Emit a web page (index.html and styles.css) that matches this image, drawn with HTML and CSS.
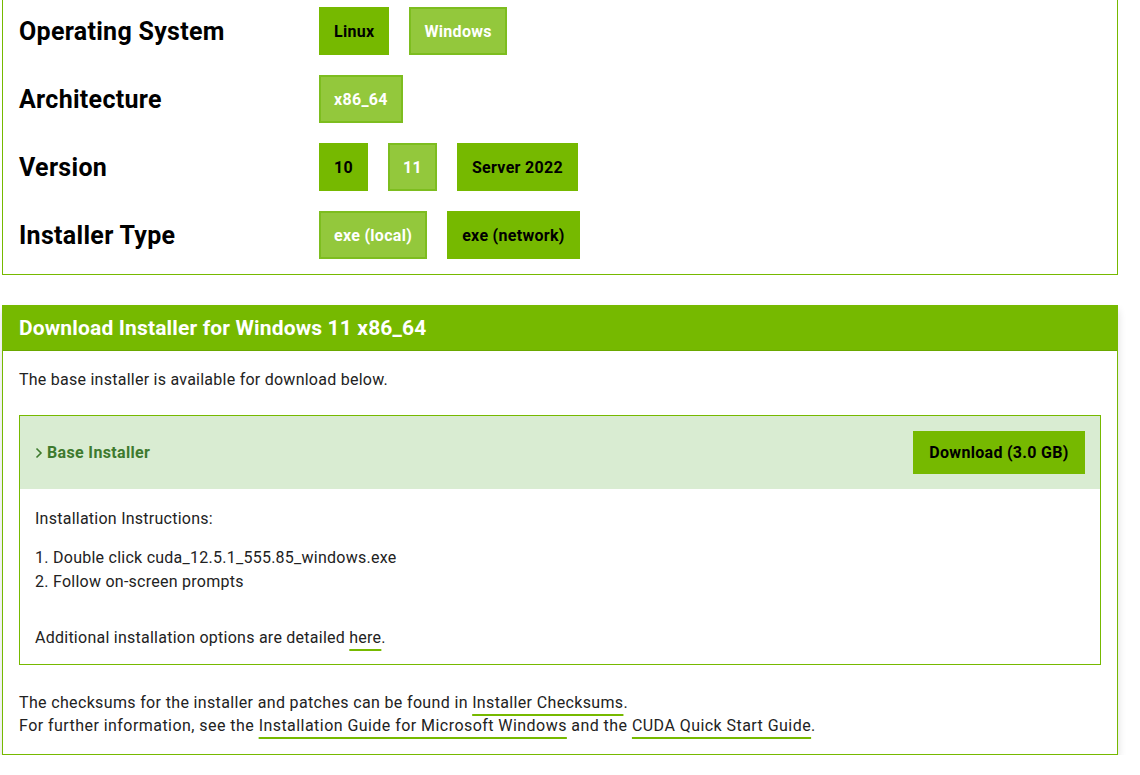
FILE: index.html
```html
<!DOCTYPE html>
<html lang="en">
<head>
<meta charset="utf-8">
<title>CUDA Toolkit Download</title>
<link rel="stylesheet" href="styles.css">
</head>
<body>
<div class="page">
  <section class="card selector">
    <div class="row">
      <div class="label">Operating System</div>
      <div class="opts">
        <span class="opt">Linux</span>
        <span class="opt active">Windows</span>
      </div>
    </div>
    <div class="row">
      <div class="label">Architecture</div>
      <div class="opts">
        <span class="opt active">x86_64</span>
      </div>
    </div>
    <div class="row">
      <div class="label">Version</div>
      <div class="opts">
        <span class="opt">10</span>
        <span class="opt active">11</span>
        <span class="opt">Server 2022</span>
      </div>
    </div>
    <div class="row">
      <div class="label">Installer Type</div>
      <div class="opts">
        <span class="opt active">exe (local)</span>
        <span class="opt">exe (network)</span>
      </div>
    </div>
  </section>

  <section class="card download">
    <h2 class="dl-head">Download Installer for Windows 11 x86_64</h2>
    <div class="dl-body">
      <p class="intro">The base installer is available for download below.</p>
      <div class="installer">
        <div class="inst-head">
          <div class="inst-title">
            <svg class="chev" width="8" height="12" viewBox="0 0 8 12"><path d="M1.5 1.5 L6 6 L1.5 10.5" fill="none" stroke="#3e7a2e" stroke-width="1.6"/></svg>
            <span>Base Installer</span>
          </div>
          <span class="dl-btn">Download (3.0 GB)</span>
        </div>
        <div class="inst-body">
          <p>Installation Instructions:</p>
          <ol>
            <li>Double click cuda_12.5.1_555.85_windows.exe</li>
            <li>Follow on-screen prompts</li>
          </ol>
          <p class="additional">Additional installation options are detailed <a href="#">here</a>.</p>
        </div>
      </div>
      <div class="footer-text">
        <p>The checksums for the installer and patches can be found in <a href="#">Installer Checksums</a>.</p>
        <p class="more">For further information, see the <a href="#">Installation Guide for Microsoft Windows</a> and the <a href="#">CUDA Quick Start Guide</a>.</p>
      </div>
    </div>
  </section>
</div>
</body>
</html>
```

FILE: styles.css
```css
html, body {
  margin: 0;
  padding: 0;
  background: #fff;
}
body {
  font-family: Roboto, "Noto Sans", "Liberation Sans", sans-serif;
  color: #1a1a1a;
}
.page {
  width: 1116px;
  margin-left: 2px;
}
.card {
  border: 1px solid #76b900;
  background: #fff;
}
.selector {
  margin-top: -7px;
  padding: 13px 16px 15px 16px;
  display: flex;
  flex-direction: column;
  gap: 20px;
}
.row {
  display: flex;
  align-items: center;
  height: 48px;
}
.label {
  width: 300px;
  font-size: 25px;
  font-weight: 700;
  color: #000;
  letter-spacing: 0.3px;
}
.opts {
  display: flex;
  gap: 20px;
}
.opt {
  box-sizing: border-box;
  height: 48px;
  display: flex;
  align-items: center;
  padding: 0 13px;
  background: #76b900;
  border: 2px solid #76b900;
  font-size: 16px;
  font-weight: 700;
  color: #000;
  letter-spacing: 0.3px;
}
.opt.active {
  background: #93c83c;
  border-color: #7dbd1f;
  color: #fff;
}
.download {
  margin-top: 30px;
  box-shadow: 0 5px 8px rgba(0, 0, 0, 0.14);
}
.dl-head {
  margin: 0;
  height: 44px;
  display: flex;
  align-items: center;
  padding-left: 16px;
  background: #76b900;
  border-bottom: 1px solid #6aa800;
  color: #fff;
  font-size: 21px;
  font-weight: 700;
  letter-spacing: 0.15px;
}
.dl-body {
  padding: 18px 16px 17px 16px;
  font-size: 16px;
  letter-spacing: 0.25px;
  color: #222;
}
.dl-body p {
  margin: 0;
  line-height: 22px;
}
.intro {
  margin-bottom: 24px !important;
}
.installer {
  border: 1px solid #76b900;
}
.inst-head {
  display: flex;
  align-items: center;
  justify-content: space-between;
  padding: 15px 15px 15px 15px;
  background: #d9ecd2;
}
.inst-title {
  display: flex;
  align-items: center;
  gap: 4px;
  font-size: 16px;
  font-weight: 700;
  color: #3e7a2e;
  letter-spacing: 0.35px;
}
.dl-btn {
  height: 43px;
  width: 172px;
  box-sizing: border-box;
  display: flex;
  align-items: center;
  justify-content: center;
  background: #76b900;
  color: #000;
  font-size: 16px;
  font-weight: 700;
  letter-spacing: 0.3px;
}
.inst-body {
  padding: 19px 15px 15px 15px;
}
.inst-body ol {
  margin: 16px 0 0 0;
  padding-left: 18px;
  line-height: 24px;
}
.inst-body .additional {
  margin-top: 33px;
}
a {
  color: inherit;
  text-decoration: underline;
  text-decoration-color: #76b900;
  text-decoration-thickness: 2px;
  text-underline-offset: 6px;
}
.footer-text {
  margin-top: 26px;
  letter-spacing: 0.35px;
}
.footer-text p {
  line-height: 23px;
}
.footer-text .more {
  letter-spacing: 0.45px;
}
```
